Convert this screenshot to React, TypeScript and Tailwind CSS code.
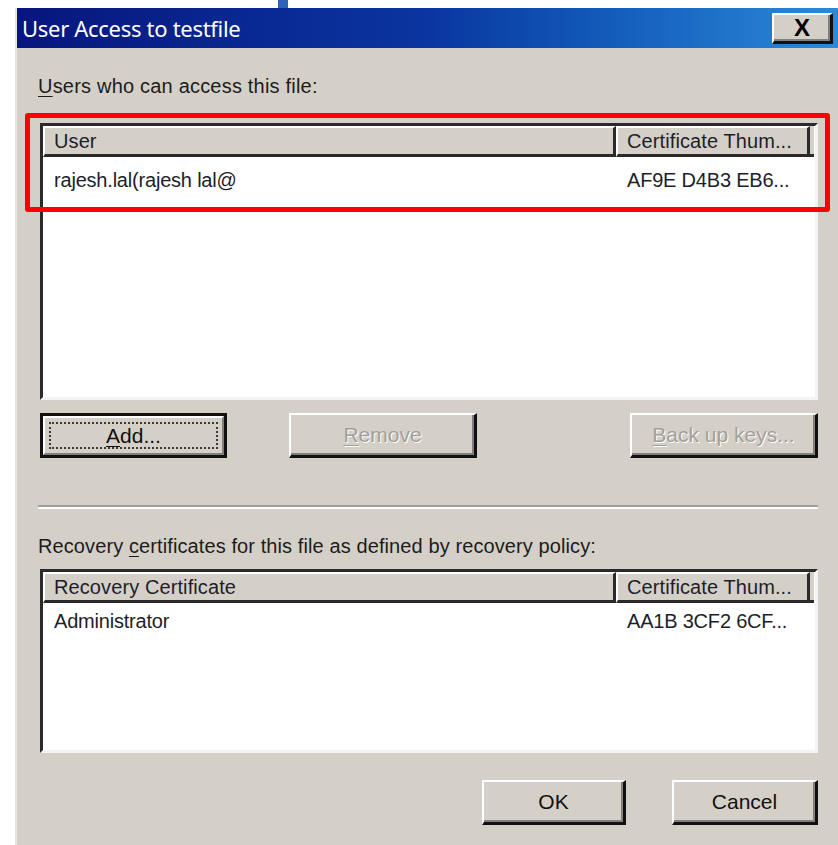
import React from 'react';

// Win2k-style dialog, everything drawn at roughly 2.2x classic size
const ui = "font-['Liberation_Sans',Arial,sans-serif]";

type Column = { title: string; width: number };

function Accel({ ch }: { ch: string }) {
  return <span className="underline decoration-1 underline-offset-[3px]">{ch}</span>;
}

function ListView({
  columns,
  rows,
  height,
  rowTop,
}: {
  columns: Column[];
  rows: string[][];
  height: number;
  rowTop: number;
}) {
  return (
    <div
      className="ml-[2px] flex flex-col border-t-[3px] border-l-[3px] border-r-[3px] border-b-[3px] border-t-[#2a2a2a] border-l-[#2a2a2a] border-r-[#f4f4f4] border-b-[#f4f4f4] bg-white"
      style={{ height }}
    >
      <div className="flex h-[31px] shrink-0">
        {columns.map((c) => (
          <div
            key={c.title}
            className="flex items-center border-t-2 border-l-2 border-t-white border-l-white border-r-[3px] border-b-[3px] border-r-[#2a2a2a] border-b-[#2a2a2a] bg-[#d4d0c8] pl-[9px] text-[20px] tracking-[0.1px] text-[#1e1e2a]"
            style={{ width: c.width }}
          >
            {c.title}
          </div>
        ))}
        <div className="w-[4px] border-b-[3px] border-b-[#2a2a2a] bg-[#d4d0c8]" />
        <div className="flex-1 bg-white" />
      </div>
      <div style={{ paddingTop: rowTop }}>
        {rows.map((r) => (
          <div key={r[0]} className="flex h-[28px] items-center text-[20px] tracking-[-0.2px] text-[#1e1e2a]">
            {r.map((cell, i) => (
              <div key={i} className="pl-[11px]" style={{ width: columns[i].width }}>
                {cell}
              </div>
            ))}
          </div>
        ))}
      </div>
    </div>
  );
}

function Button({
  children,
  width,
  isDefault,
  disabled,
  className = '',
}: {
  children: React.ReactNode;
  width: number;
  isDefault?: boolean;
  disabled?: boolean;
  className?: string;
}) {
  const label = disabled
    ? 'text-[#a29f98] [text-shadow:1px_1px_0_#ffffff]'
    : 'text-[#111111]';
  if (isDefault) {
    return (
      <div className={`h-[45px] border-[3px] border-[#111111] ${className}`} style={{ width }}>
        <div className="flex h-full items-center justify-center border-t-2 border-l-2 border-t-white border-l-white border-r-2 border-b-2 border-r-[#808080] border-b-[#808080] bg-[#d4d0c8] p-[4px]">
          <div className={`flex h-full w-full items-center justify-center border-2 border-dotted border-[#3a3a3a] text-[21px] ${label}`}>
            {children}
          </div>
        </div>
      </div>
    );
  }
  return (
    <div
      className={`flex h-[45px] items-center justify-center border-t-2 border-l-2 border-t-white border-l-white border-r-[3px] border-b-[3px] border-r-[#111111] border-b-[#111111] bg-[#d4d0c8] text-[21px] shadow-[inset_-2px_-2px_0_#808080] ${label} ${className}`}
      style={{ width }}
    >
      {children}
    </div>
  );
}

export default function App() {
  return (
    <div className={`flex h-[845px] w-[838px] flex-col overflow-hidden bg-white ${ui}`}>
      {/* strip of the window behind */}
      <div className="flex h-[8px] shrink-0">
        <div className="ml-[278px] w-[10px] bg-[#2f63b5]" />
      </div>

      <div className="ml-[15px] flex flex-1 flex-col border-l-2 border-l-[#e8e6e1] bg-[#d4d0c8]">
        {/* caption */}
        <div className="flex h-[40px] shrink-0 items-center justify-between bg-gradient-to-r from-[#08157e] via-[#0b35a0] to-[#2c8ad9] pl-[5px] pr-[5px]">
          <span className="font-['Noto_Sans',sans-serif] text-[22px] tracking-[-0.3px] text-white">User Access to testfile</span>
          <div className="flex h-[31px] w-[61px] items-center justify-center border-t-2 border-l-2 border-t-white border-l-white border-r-[3px] border-b-[3px] border-r-[#111111] border-b-[#111111] bg-[#d4d0c8] text-[24px] font-bold text-black shadow-[inset_-2px_-2px_0_#808080]">
            X
          </div>
        </div>

        <div className="flex flex-1 flex-col pl-[21px] pr-[20px]">
          <div className="mt-[26px] h-[24px] text-[20px] leading-[24px] tracking-[0.2px] text-[#1c1c1c]">
            <Accel ch="U" />sers who can access this file:
          </div>

          <div className="relative mt-[25px]">
            <ListView
              height={277}
              rowTop={9}
              columns={[
                { title: 'User', width: 573 },
                { title: 'Certificate Thum...', width: 194 },
              ]}
              rows={[['rajesh.lal(rajesh lal@', 'AF9E D4B3 EB6...']]}
            />
            {/* highlight around the user row */}
            <div className="pointer-events-none absolute left-[-13px] top-[-10px] h-[99px] w-[805px] rounded-[3px] border-[5px] border-[#ff0000]" />
          </div>

          <div className="mt-[13px] flex items-center justify-between pl-[2px]">
            <div className="flex gap-[62px]">
              <Button width={187} isDefault>
                <span><Accel ch="A" />dd...</span>
              </Button>
              <Button width={188} disabled>
                <span><Accel ch="R" />emove</span>
              </Button>
            </div>
            <Button width={188} disabled>
              <span><Accel ch="B" />ack up keys...</span>
            </Button>
          </div>

          <div className="mt-[47px] border-t-2 border-b-2 border-t-[#a09d96] border-b-white" />

          <div className="mt-[25px] h-[24px] text-[20px] leading-[24px] tracking-[0.1px] text-[#1c1c1c]">
            Recovery <Accel ch="c" />ertificates for this file as defined by recovery policy:
          </div>

          <div className="mt-[11px]">
            <ListView
              height={184}
              rowTop={4}
              columns={[
                { title: 'Recovery Certificate', width: 573 },
                { title: 'Certificate Thum...', width: 194 },
              ]}
              rows={[['Administrator', 'AA1B 3CF2 6CF...']]}
            />
          </div>

          <div className="mt-[27px] flex justify-end gap-[46px]">
            <Button width={144}>OK</Button>
            <Button width={146}>Cancel</Button>
          </div>
        </div>
      </div>
    </div>
  );
}
